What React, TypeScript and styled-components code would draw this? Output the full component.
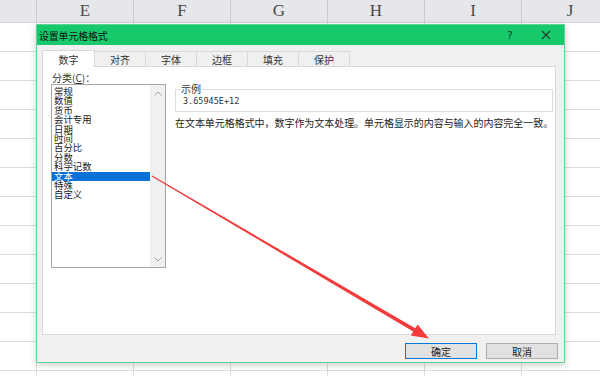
import React from 'react'
import styled, { createGlobalStyle } from 'styled-components'

const GlobalStyle = createGlobalStyle`
  html, body {
    margin: 0;
    padding: 0;
    overflow: hidden;
    background: #fff;
  }
  body {
    font-family: 'Noto Sans CJK SC', 'Noto Sans', sans-serif;
  }
`

const COLUMNS = ['', 'E', 'F', 'G', 'H', 'I', 'J']
const GRID = '37px repeat(6, 97px)'
const ROW_COUNT = 13

const TABS = ['数字', '对齐', '字体', '边框', '填充', '保护']
const CATEGORIES = ['常规', '数值', '货币', '会计专用', '日期', '时间', '百分比', '分数', '科学记数', '文本', '特殊', '自定义']
const SELECTED = 9

const Sheet = styled.div`
  position: relative;
  width: 600px;
  height: 376px;
  overflow: hidden;
  background: #fff;
`

const HeaderRow = styled.div`
  display: grid;
  grid-template-columns: ${GRID};
  height: 22px;
  background: #e5e7ea;
  border-bottom: 1px solid #d3d5d8;
`

const HeaderCell = styled.div`
  box-sizing: border-box;
  border-right: 1px solid #c9cbce;
  display: flex;
  align-items: center;
  justify-content: center;
  font-family: 'Liberation Serif', serif;
  font-size: 17px;
  color: #4a4a4a;
`

const Row = styled.div`
  display: grid;
  grid-template-columns: ${GRID};
  height: 28px;
  border-bottom: 1px solid #dedede;
`

const Cell = styled.div`
  box-sizing: border-box;
  border-right: 1px solid #dedede;
`

// dialog window floating over the sheet
const Dialog = styled.div`
  position: absolute;
  left: 36px;
  top: 24px;
  width: 529px;
  height: 339px;
  box-sizing: border-box;
  border: 1px solid #5cd493;
  background: #f0f0f0;
  box-shadow: 0 2px 7px rgba(0, 0, 0, 0.2);
  display: flex;
  flex-direction: column;
`

const TitleBar = styled.div`
  height: 20px;
  flex-shrink: 0;
  background: #17c96b;
  display: flex;
  align-items: center;
  padding-left: 2px;
`

const Title = styled.span`
  flex: 1;
  font-size: 10px;
  color: #111;
  letter-spacing: -0.2px;
`

const TitleButton = styled.div`
  width: 36px;
  height: 20px;
  display: flex;
  align-items: center;
  justify-content: center;
  font-family: 'DejaVu Sans', sans-serif;
  font-size: 11px;
  color: #1d3b2a;
`

const Body = styled.div`
  flex: 1;
  display: flex;
  flex-direction: column;
  padding: 5px 8px 0 5px;
  min-height: 0;
`

const TabRow = styled.div`
  display: flex;
  align-items: flex-end;
  height: 16px;
  flex-shrink: 0;
`

const Tab = styled.div<{ $active?: boolean }>`
  position: relative;
  box-sizing: border-box;
  width: ${({ $active }) => ($active ? 53 : 52)}px;
  height: ${({ $active }) => ($active ? 17 : 15)}px;
  margin-left: -1px;
  margin-bottom: ${({ $active }) => ($active ? -1 : 0)}px;
  z-index: ${({ $active }) => ($active ? 2 : 1)};
  border: 1px solid #d9d9d9;
  border-bottom: none;
  background: ${({ $active }) => ($active ? '#fff' : '#f0f0f0')};
  display: flex;
  align-items: center;
  justify-content: center;
  font-size: 10px;
  color: #333;
  &:first-child {
    margin-left: 0;
  }
`

const Panel = styled.div`
  flex: 1;
  box-sizing: border-box;
  background: #fff;
  border: 1px solid #d9d9d9;
  display: flex;
  gap: 9px;
  padding: 5px 7px 0 8px;
`

const LeftColumn = styled.div`
  display: flex;
  flex-direction: column;
  width: 115px;
`

const FieldLabel = styled.div`
  height: 12px;
  line-height: 12px;
  padding-left: 1px;
  font-size: 10px;
  color: #333;
  u {
    text-decoration: underline;
  }
`

const ListBox = styled.div`
  box-sizing: border-box;
  width: 115px;
  height: 184px;
  border: 1px solid #a6a6a6;
  display: flex;
  background: #fff;
`

const ListItems = styled.div`
  flex: 1;
  padding-top: 2px;
`

const ListItem = styled.div<{ $selected?: boolean }>`
  height: 9.4px;
  line-height: 9.4px;
  padding-left: 2px;
  font-size: 9.4px;
  color: ${({ $selected }) => ($selected ? '#fff' : '#222')};
  background: ${({ $selected }) => ($selected ? '#0a72d6' : 'transparent')};
  white-space: nowrap;
`

const ScrollTrack = styled.div`
  width: 15px;
  background: #f0f0f0;
  display: flex;
  flex-direction: column;
  justify-content: space-between;
  align-items: center;
  padding: 6px 0 5px;
`

const RightColumn = styled.div`
  flex: 1;
  display: flex;
  flex-direction: column;
  padding-top: 12px;
`

const SampleBox = styled.fieldset`
  margin: 0;
  padding: 1px 7px 4px;
  border: 1px solid #dcdcdc;
  min-width: 0;
`

const SampleLegend = styled.legend`
  padding: 0 1px;
  margin-left: -3px;
  font-size: 10px;
  line-height: 10px;
  color: #333;
`

const SampleValue = styled.div`
  font-family: 'DejaVu Sans Mono', 'Liberation Mono', monospace;
  font-size: 8.5px;
  line-height: 12px;
  color: #333;
`

const Description = styled.div`
  margin-top: 5px;
  font-size: 10px;
  line-height: 12px;
  color: #222;
  white-space: nowrap;
  letter-spacing: -0.05px;
`

const Footer = styled.div`
  height: 27px;
  flex-shrink: 0;
  box-sizing: border-box;
  display: flex;
  justify-content: flex-end;
  align-items: flex-start;
  gap: 9px;
  padding: 8px 6px 0 0;
`

const Button = styled.div<{ $focused?: boolean }>`
  box-sizing: border-box;
  width: 72px;
  height: 16px;
  display: flex;
  align-items: center;
  justify-content: center;
  background: #e1e1e1;
  border: 1px solid ${({ $focused }) => ($focused ? '#0078d7' : '#adadad')};
  font-size: 10px;
  color: #222;
`

const ArrowLayer = styled.svg`
  position: absolute;
  left: 0;
  top: 0;
  pointer-events: none;
`

function Chevron({ up }: { up?: boolean }) {
  return (
    <svg width="8" height="5" viewBox="0 0 8 5">
      <path d={up ? 'M0.5 4.5 L4 1 L7.5 4.5' : 'M0.5 0.5 L4 4 L7.5 0.5'} fill="none" stroke="#a2a2a2" strokeWidth="1" />
    </svg>
  )
}

function CloseIcon() {
  return (
    <svg width="10" height="10" viewBox="0 0 10 10">
      <path d="M1 1 L9 9 M9 1 L1 9" stroke="#1d3b2a" strokeWidth="1.1" />
    </svg>
  )
}

export default function App() {
  return (
    <Sheet>
      <GlobalStyle />
      <HeaderRow>
        {COLUMNS.map((c, i) => (
          <HeaderCell key={i}>{c}</HeaderCell>
        ))}
      </HeaderRow>
      {Array.from({ length: ROW_COUNT }).map((_, r) => (
        <Row key={r}>
          {COLUMNS.map((_, i) => (
            <Cell key={i} />
          ))}
        </Row>
      ))}

      <Dialog>
        <TitleBar>
          <Title>设置单元格格式</Title>
          <TitleButton>?</TitleButton>
          <TitleButton>
            <CloseIcon />
          </TitleButton>
        </TitleBar>
        <Body>
          <TabRow>
            {TABS.map((t, i) => (
              <Tab key={t} $active={i === 0}>
                {t}
              </Tab>
            ))}
          </TabRow>
          <Panel>
            <LeftColumn>
              <FieldLabel>
                分类(<u>C</u>)：
              </FieldLabel>
              <ListBox>
                <ListItems>
                  {CATEGORIES.map((c, i) => (
                    <ListItem key={c} $selected={i === SELECTED}>
                      {c}
                    </ListItem>
                  ))}
                </ListItems>
                <ScrollTrack>
                  <Chevron up />
                  <Chevron />
                </ScrollTrack>
              </ListBox>
            </LeftColumn>
            <RightColumn>
              <SampleBox>
                <SampleLegend>示例</SampleLegend>
                <SampleValue>3.65945E+12</SampleValue>
              </SampleBox>
              <Description>在文本单元格格式中，数字作为文本处理。单元格显示的内容与输入的内容完全一致。</Description>
            </RightColumn>
          </Panel>
        </Body>
        <Footer>
          <Button $focused>确定</Button>
          <Button>取消</Button>
        </Footer>
      </Dialog>

      {/* annotation arrow drawn over the screenshot */}
      <ArrowLayer width="600" height="376" viewBox="0 0 600 376">
        <polygon
          points="152.3,175.6 415.2,328.2 417.6,324.4 429,338.6 410.8,335.4 413.2,331.6 151.7,176.4"
          fill="#f23b3b"
        />
      </ArrowLayer>
    </Sheet>
  )
}
